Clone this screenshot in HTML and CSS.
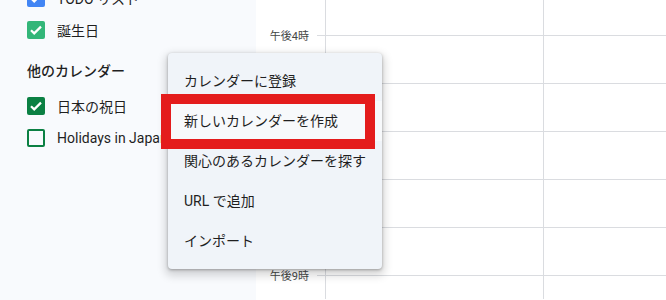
FILE: index.html
```html
<!DOCTYPE html>
<html lang="ja">
<head>
    <meta charset="UTF-8">
    <meta name="viewport" content="width=device-width, initial-scale=1.0">
    <title>カレンダー</title>
    <link rel="stylesheet" href="styles.css">
</head>
<body>
    <div class="sidebar">
        <ul class="cal-list first">
            <li><span class="check checked blue"><svg viewBox="0 0 18 18"><path d="M4 9.2l3.2 3.2L14 5.6"/></svg></span>TODO リスト</li>
            <li><span class="check checked green"><svg viewBox="0 0 18 18"><path d="M4 9.2l3.2 3.2L14 5.6"/></svg></span>誕生日</li>
        </ul>

        <h3 class="section-title">他のカレンダー</h3>

        <ul class="cal-list">
            <li><span class="check checked dark-green"><svg viewBox="0 0 18 18"><path d="M4 9.2l3.2 3.2L14 5.6"/></svg></span>日本の祝日</li>
            <li><span class="check empty"></span>Holidays in Japan</li>
        </ul>
    </div>

    <div class="week">
        <div class="row top">
            <div class="gutter"></div>
            <div class="day"></div>
            <div class="day"></div>
        </div>
        <div class="row">
            <div class="gutter"><span class="time">午後4時</span><span class="tick"></span></div>
            <div class="day"></div>
            <div class="day"></div>
        </div>
        <!-- 5時〜8時 are under the menu -->
        <div class="row">
            <div class="gutter"><span class="time"></span><span class="tick"></span></div>
            <div class="day"></div>
            <div class="day"></div>
        </div>
        <div class="row">
            <div class="gutter"><span class="time"></span><span class="tick"></span></div>
            <div class="day"></div>
            <div class="day"></div>
        </div>
        <div class="row">
            <div class="gutter"><span class="time"></span><span class="tick"></span></div>
            <div class="day"></div>
            <div class="day"></div>
        </div>
        <div class="row">
            <div class="gutter"><span class="time"></span><span class="tick"></span></div>
            <div class="day"></div>
            <div class="day"></div>
        </div>
        <div class="row last">
            <div class="gutter"><span class="time">午後9時</span><span class="tick"></span></div>
            <div class="day"></div>
            <div class="day"></div>
        </div>
    </div>

    <!-- "他のカレンダーを追加" menu -->
    <ul class="menu">
        <li>カレンダーに登録</li>
        <li class="active">新しいカレンダーを作成</li>
        <li>関心のあるカレンダーを探す</li>
        <li>URL で追加</li>
        <li>インポート</li>
    </ul>

    <div class="highlight"></div>
</body>
</html>
```

FILE: styles.css
```css
html {
    overflow: hidden;
}

body {
    margin: 0;
    height: 300px;
    overflow: hidden;
    display: flex;
    font-family: Roboto, "Noto Sans CJK JP", sans-serif;
    font-size: 14px;
    color: #1f1f1f;
    background: #fff;
}

.sidebar {
    width: 256px;
    flex-shrink: 0;
    background: #f8fafd;
    padding-left: 27px;
    box-sizing: border-box;
}

.cal-list {
    list-style: none;
    margin: 0;
    padding: 0;
}

.cal-list.first {
    margin-top: -18px;
}

.cal-list li {
    height: 32px;
    display: flex;
    align-items: center;
    gap: 12px;
    white-space: nowrap;
}

.check {
    width: 18px;
    height: 18px;
    border-radius: 2px;
    box-sizing: border-box;
    flex-shrink: 0;
    display: flex;
}

.check svg {
    width: 18px;
    height: 18px;
}

.check path {
    fill: none;
    stroke: #fff;
    stroke-width: 2.2;
}

.check.blue {
    background: #4285f4;
}

.check.green {
    background: #33b679;
}

.check.dark-green {
    background: #0b8043;
}

.check.empty {
    border: 2px solid #0b8043;
}

.section-title {
    margin: 14px 0 8px;
    font-size: 14px;
    font-weight: 500;
    line-height: 22px;
}

.week {
    flex: 1;
    min-width: 0;
    height: 300px;
    overflow: hidden;
}

.row {
    display: flex;
    height: 48px;
}

.row.top {
    height: 35px;
}

.row.last {
    height: 24px;
}

.gutter {
    width: 69px;
    flex-shrink: 0;
    display: flex;
}

.time {
    flex: 1;
    text-align: right;
    padding-right: 8px;
    font-size: 11px;
    line-height: 16px;
    margin-top: -6px;
    color: #444746;
}

.tick {
    width: 8px;
    border-top: 1px solid #dadce0;
}

.day {
    width: 218px;
    flex-shrink: 0;
    border-left: 1px solid #dadce0;
    border-top: 1px solid #dadce0;
    box-sizing: border-box;
}

.day + .day {
    flex-shrink: 1;
    width: auto;
    flex-grow: 1;
}

.row.top .day {
    border-top: none;
}

.menu {
    position: absolute;
    left: 168px;
    top: 53px;
    width: 214px;
    margin: 0;
    padding: 8px 0;
    list-style: none;
    background: #f0f4f9;
    border-radius: 4px;
    box-shadow: 0 1px 3px rgba(0, 0, 0, 0.3), 0 4px 8px 3px rgba(0, 0, 0, 0.15);
}

.menu li {
    height: 40px;
    line-height: 40px;
    padding: 0 16px;
    white-space: nowrap;
}

.menu li.active {
    background: #f7f9fb;
}

.highlight {
    position: absolute;
    left: 161px;
    top: 94px;
    width: 214px;
    height: 55px;
    border: 10px solid #e41c1c;
    box-sizing: border-box;
}
```
